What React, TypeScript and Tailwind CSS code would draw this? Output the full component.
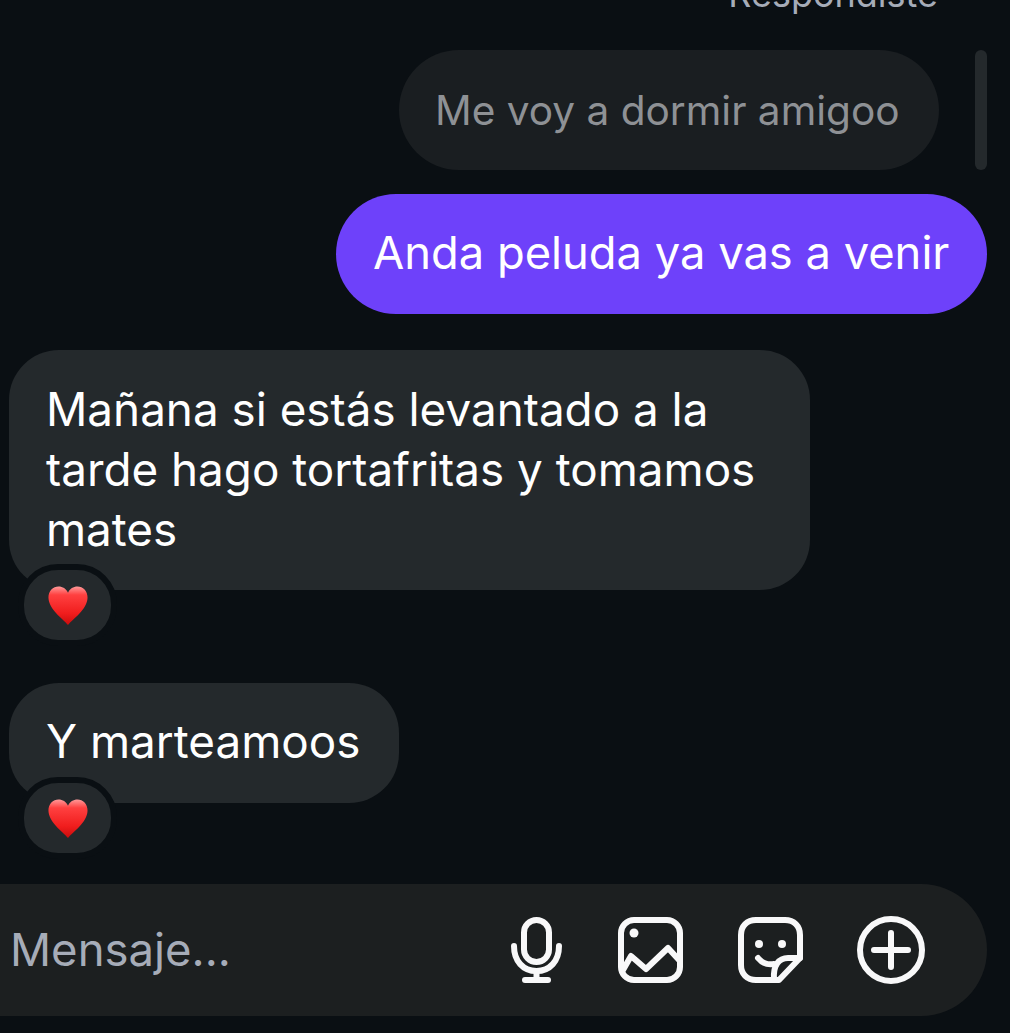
const font = { fontFamily: "Inter, 'Noto Sans', sans-serif" };

function Heart() {
  return (
    <svg width="42" height="41" viewBox="0 0 44 43" aria-hidden="true">
      <defs>
        <linearGradient id="hg" x1="0" y1="0" x2="0" y2="1">
          <stop offset="0" stopColor="#ff9a9a" />
          <stop offset="0.22" stopColor="#ff4040" />
          <stop offset="0.7" stopColor="#f01d1d" />
          <stop offset="1" stopColor="#c90c0c" />
        </linearGradient>
      </defs>
      <path
        d="M22 42 C16 35 2 26 1.500 13.500 C1.200 6 6.500 1.500 12 1.500 C16.500 1.500 20 3.800 22 8 C24 3.800 27.500 1.500 32 1.500 C37.500 1.500 42.800 6 42.500 13.500 C42 26 28 35 22 42 Z"
        fill="url(#hg)"
      />
    </svg>
  );
}

function Reaction() {
  return (
    <div className="relative z-10 ml-[18px] -mt-[26px] flex h-[82px] w-[99px] items-center justify-center rounded-[40px] border-[6px] border-[#0a0f13] bg-[#24292c]">
      <Heart />
    </div>
  );
}

function Mic() {
  return (
    <svg width="51" height="66" viewBox="0 0 51 66" fill="none" stroke="#f8f8f9" strokeWidth="6" strokeLinecap="round" strokeLinejoin="round" aria-hidden="true">
      <rect x="13" y="3" width="25" height="42" rx="12.500" />
      <path d="M3 29 C3 44 12 54 25.500 54 C39 54 48 44 48 29" />
      <path d="M25.500 54 V63" />
      <path d="M14 63 H37" />
    </svg>
  );
}

function ImageIcon() {
  return (
    <svg width="65" height="66" viewBox="0 0 65 66" fill="none" stroke="#f8f8f9" strokeWidth="6" strokeLinecap="round" strokeLinejoin="round" aria-hidden="true">
      <rect x="3" y="3" width="59" height="60" rx="13" />
      <circle cx="16" cy="16" r="4.500" fill="#f8f8f9" stroke="none" />
      <path d="M5 53 L13 39 L28 52 L50 31 L62 44" />
    </svg>
  );
}

function Sticker() {
  return (
    <svg width="65" height="66" viewBox="0 0 65 66" fill="none" stroke="#f8f8f9" strokeWidth="6" strokeLinecap="round" strokeLinejoin="round" aria-hidden="true">
      <path d="M41 63 H18 C9 63 3 57 3 48 V18 C3 9 9 3 18 3 H47 C56 3 62 9 62 18 V41 L41 63 Z" />
      <circle cx="21" cy="27" r="4" fill="#f8f8f9" stroke="none" />
      <circle cx="44" cy="27" r="4" fill="#f8f8f9" stroke="none" />
      <path d="M20 41 C24 46 30 48 36 47" />
      <path d="M62 41 H50 C41 41 35 48 36 62" />
    </svg>
  );
}

function Plus() {
  return (
    <svg width="68" height="68" viewBox="0 0 68 68" fill="none" stroke="#f8f8f9" strokeLinecap="round" aria-hidden="true">
      <circle cx="34" cy="34" r="31" strokeWidth="6" />
      <path d="M17 34 H51 M34 17 V51" strokeWidth="6" />
    </svg>
  );
}

export default function App() {
  return (
    <div className="relative flex h-[1033px] w-[1010px] flex-col overflow-hidden bg-[#0a0f13]" style={font}>
      <div className="-mt-[28px] h-[44px] pr-[72px] text-right text-[36px] leading-[44px] text-[#a6acb8]">Respondiste</div>

      <div className="absolute left-[975px] top-[50px] h-[120px] w-[12px] rounded-full bg-[#24292c]" />

      <div className="mt-[34px] flex justify-end pr-[71px]">
        <div className="flex h-[120px] w-[540px] items-center rounded-[60px] bg-[#1a1e21] pl-[36px] pt-[2px] text-[40.600px] text-[#8e9195]">
          Me voy a dormir amigoo
        </div>
      </div>

      <div className="mt-[24px] flex justify-end pr-[23px]">
        <div className="flex h-[120px] w-[651px] items-center rounded-[60px] bg-[#6e41fa] pb-[2px] pl-[37px] text-[45.300px] text-white">
          Anda peluda ya vas a venir
        </div>
      </div>

      <div className="ml-[9px] mt-[36px] w-[801px] rounded-[50px] bg-[#24292c] px-[37px] py-[30px] text-[45.800px] leading-[60px] text-white">
        Mañana si estás levantado a la
        <br />
        tarde hago tortafritas y tomamos
        <br />
        mates
      </div>
      <Reaction />

      <div className="ml-[9px] mt-[37px] flex h-[120px] w-[390px] items-center rounded-[50px] bg-[#24292c] px-[37px] pb-[2px] text-[45.800px] text-white">
        Y marteamoos
      </div>
      <Reaction />

      <div className="mt-[25px] flex h-[132px] w-[987px] items-center rounded-r-[66px] bg-[#1c1f20] pl-[10px] pr-[62px]">
        <span className="flex-1 text-[45.500px] text-[#a6acb8]">Mensaje...</span>
        <div className="flex items-center">
          <div className="mr-[56px]"><Mic /></div>
          <div className="mr-[55px]"><ImageIcon /></div>
          <div className="mr-[54px]"><Sticker /></div>
          <Plus />
        </div>
      </div>
    </div>
  );
}
